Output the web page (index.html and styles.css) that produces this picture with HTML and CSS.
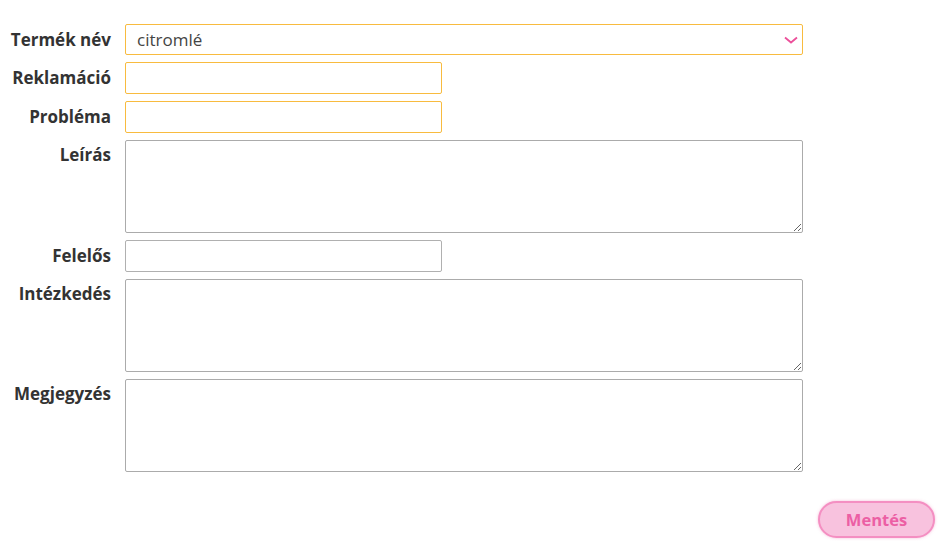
FILE: index.html
```html
<!DOCTYPE html>
<html lang="hu">
<head>
<meta charset="utf-8">
<link rel="stylesheet" href="styles.css">
</head>
<body>
<form class="form">
  <label class="label">Termék név</label>
  <div class="select">
    <span class="select-value">citromlé</span>
    <svg class="chevron" width="14" height="8" viewBox="0 0 14 8"><path d="M1 1.5 L7 6.5 L13 1.5" fill="none" stroke="#ec4f9a" stroke-width="1.8"/></svg>
  </div>

  <label class="label">Reklamáció</label>
  <input class="input short warn" type="text">

  <label class="label">Probléma</label>
  <input class="input short warn" type="text">

  <label class="label top">Leírás</label>
  <textarea class="textarea"></textarea>

  <label class="label">Felelős</label>
  <input class="input short" type="text">

  <label class="label top">Intézkedés</label>
  <textarea class="textarea"></textarea>

  <label class="label top">Megjegyzés</label>
  <textarea class="textarea"></textarea>
</form>
<div class="actions">
  <button class="save" type="button">Mentés</button>
</div>
</body>
</html>
```

FILE: styles.css
```css
* { box-sizing: border-box; }
body {
  margin: 0;
  font-family: "Open Sans", "Liberation Sans", sans-serif;
  background: #fff;
  width: 945px;
  height: 545px;
  overflow: hidden;
}
.form {
  display: grid;
  grid-template-columns: 111px 678px;
  column-gap: 14px;
  row-gap: 7px;
  padding-top: 24px;
  align-items: center;
}
.label {
  text-align: right;
  font-weight: 700;
  font-size: 17px;
  color: #333;
  line-height: 22px;
  white-space: nowrap;
}
.label.top {
  align-self: start;
  padding-top: 4px;
}
.select {
  height: 31px;
  border: 1px solid #f8bb3f;
  border-radius: 2px;
  display: flex;
  align-items: center;
  justify-content: space-between;
  padding: 0 4px 0 11px;
}
.select-value {
  font-size: 17px;
  color: #444;
}
.input {
  height: 32px;
  border: 1px solid #b0b0b0;
  border-radius: 2px;
  font: inherit;
  padding: 0 8px;
}
.input.short { width: 317px; }
.input.warn { border-color: #f8bb3f; }
.textarea {
  height: 93px;
  width: 678px;
  border: 1px solid #ababab;
  border-radius: 2px;
  resize: vertical;
  font: inherit;
  margin: 0;
  display: block;
}
.actions {
  display: flex;
  justify-content: flex-end;
  padding: 29px 10px 0 0;
}
.save {
  width: 117px;
  height: 37px;
  border-radius: 19px;
  border: 2px solid #f48fc2;
  background: #f8c2de;
  color: #ec5fa4;
  font-family: "Open Sans", sans-serif;
  font-weight: 700;
  font-size: 16.5px;
  padding: 0;
  box-shadow: 0 0 3px rgba(240,120,180,0.5);
}
```
